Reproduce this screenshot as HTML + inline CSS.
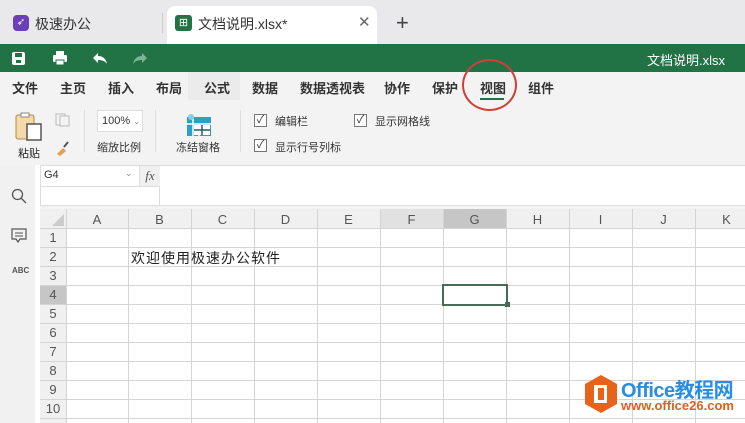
<!DOCTYPE html><html><head><meta charset="utf-8"><style>
*{margin:0;padding:0;box-sizing:border-box}
body{width:745px;height:423px;overflow:hidden;position:relative;background:#fff;font-family:"Liberation Sans","Noto Sans CJK SC",sans-serif;color:#222}
.a{position:absolute}
.vl{position:absolute;width:1px;background:#d4d4d4;top:209px;height:214px}
.hl{position:absolute;height:1px;background:#d4d4d4;left:40px;width:705px}
.ch{position:absolute;top:211px;height:18px;font-size:13px;color:#555;text-align:center;line-height:18px}
.rh{position:absolute;left:40px;width:26px;height:19px;font-size:13px;color:#555;text-align:center;line-height:19px}
.menu span{position:absolute;top:78px;font-size:13px;font-weight:bold;color:#333}
.cb{position:absolute;width:13px;height:13px;border:1px solid #777;background:#fff;font-size:11px;line-height:11px;text-align:center;color:#333}
</style></head><body>
<div class="a" style="left:0;top:0;width:745px;height:44px;background:#e9e9ec"></div>
<div class="a" style="left:13px;top:15px;width:16px;height:16px;border-radius:4px;background:#6a3fb8;color:#fff;font-size:10px;text-align:center;line-height:16px">➶</div>
<div class="a" style="left:35px;top:14px;font-size:14px;color:#333">极速办公</div>
<div class="a" style="left:162px;top:13px;width:1px;height:20px;background:#ccc"></div>
<div class="a" style="left:167px;top:6px;width:210px;height:38px;background:#fff;border-radius:8px 8px 0 0"></div>
<div class="a" style="left:175px;top:15px;width:17px;height:16px;border-radius:3px;background:#217346;color:#fff;font-size:11px;text-align:center;line-height:16px">⊞</div>
<div class="a" style="left:198px;top:14px;font-size:14px;color:#333">文档说明.xlsx*</div>
<div class="a" style="left:358px;top:13px;font-size:15px;color:#666">✕</div>
<div class="a" style="left:396px;top:10px;font-size:22px;color:#444">+</div>
<div class="a" style="left:0;top:44px;width:745px;height:28px;background:#217346"></div>
<svg class="a" style="left:11px;top:51px" width="16" height="15"><rect x="1" y="1" width="13" height="13" rx="2" fill="#fff"/><rect x="4" y="2" width="7" height="4" fill="#217346"/><rect x="5" y="9" width="5" height="3" fill="#217346"/></svg>
<svg class="a" style="left:52px;top:50px" width="16" height="16"><rect x="4" y="1" width="8" height="4" fill="#fff"/><rect x="1" y="5" width="14" height="7" rx="1" fill="#fff"/><rect x="4" y="10" width="8" height="5" fill="#fff" stroke="#217346"/></svg>
<svg class="a" style="left:92px;top:51px" width="16" height="14"><path d="M6 2 L1 7 L6 12 V9 C10 9 13 10 15 13 C14 8 11 5 6 5Z" fill="#fff"/></svg>
<svg class="a" style="left:132px;top:51px" width="16" height="14"><path d="M10 2 L15 7 L10 12 V9 C6 9 3 10 1 13 C2 8 5 5 10 5Z" fill="#7fb596"/></svg>
<div class="a" style="left:647px;top:50px;font-size:13px;color:#fff">文档说明.xlsx</div>
<div class="a" style="left:0;top:72px;width:745px;height:93px;background:#f3f3f3"></div>
<div class="a" style="left:188px;top:72px;width:52px;height:28px;background:#ebebeb"></div>
<div class="menu">
<span style="left:12px">文件</span><span style="left:60px">主页</span><span style="left:108px">插入</span><span style="left:156px">布局</span><span style="left:204px">公式</span><span style="left:252px">数据</span><span style="left:300px">数据透视表</span><span style="left:384px">协作</span><span style="left:432px">保护</span><span style="left:480px">视图</span><span style="left:528px">组件</span>
</div>
<div class="a" style="left:480px;top:98px;width:24px;height:2px;background:#217346"></div>
<div class="a" style="left:462px;top:59px;width:55px;height:52px;border:2.5px solid #d0403a;border-radius:50%"></div>
<svg class="a" style="left:14px;top:112px" width="30" height="32"><rect x="2" y="3" width="18" height="24" rx="2" fill="#f5d9a8" stroke="#b48a4a"/><rect x="7" y="1" width="8" height="4" fill="#fff" stroke="#888"/><rect x="13" y="12" width="14" height="16" fill="#fff" stroke="#555" stroke-width="1.5"/></svg>
<div class="a" style="left:18px;top:145px;font-size:11px">粘贴</div>
<svg class="a" style="left:55px;top:113px" width="16" height="14"><rect x="1" y="1" width="9" height="11" fill="none" stroke="#bbb"/><rect x="5" y="3" width="9" height="10" fill="#f3f3f3" stroke="#bbb"/></svg>
<svg class="a" style="left:54px;top:140px" width="16" height="16"><path d="M3 14 L9 8 L12 11 L6 16Z" fill="#e0a050"/><path d="M10 7 L14 2" stroke="#555" stroke-width="2"/></svg>
<div class="a" style="left:84px;top:110px;width:1px;height:42px;background:#ddd"></div>
<div class="a" style="left:97px;top:110px;width:46px;height:22px;background:#fff;border:1px solid #ddd;font-size:11px;line-height:20px;padding-left:4px;color:#333">100% <span style="font-size:8px;color:#888">⌄</span></div>
<div class="a" style="left:97px;top:139px;font-size:11px;color:#333">缩放比例</div>
<div class="a" style="left:155px;top:110px;width:1px;height:42px;background:#ddd"></div>
<svg class="a" style="left:185px;top:113px" width="28" height="24"><rect x="2" y="4" width="24" height="19" fill="#2b9fc4"/><g stroke="#fff" stroke-width="1.5"><path d="M2 11H26M14 11V23M8 4V23"/></g><rect x="9" y="12" width="16" height="10" fill="#fff"/><path d="M9 17H25M17 12V22" stroke="#2a5a6a" stroke-width="1.5"/><circle cx="6" cy="4" r="3" fill="#7fd0e8"/></svg>
<div class="a" style="left:176px;top:139px;font-size:11px;color:#333">冻结窗格</div>
<div class="a" style="left:240px;top:110px;width:1px;height:42px;background:#ddd"></div>
<div class="cb" style="left:254px;top:114px">✓</div><div class="a" style="left:275px;top:113px;font-size:11px;color:#333">编辑栏</div>
<div class="cb" style="left:354px;top:114px">✓</div><div class="a" style="left:375px;top:113px;font-size:11px;color:#333">显示网格线</div>
<div class="cb" style="left:254px;top:139px">✓</div><div class="a" style="left:275px;top:139px;font-size:11px;color:#333">显示行号列标</div>
<div class="a" style="left:0;top:165px;width:35px;height:258px;background:#f1f1f1"></div>
<svg class="a" style="left:11px;top:188px" width="16" height="16"><circle cx="6.5" cy="6.5" r="5" fill="none" stroke="#555" stroke-width="1.3"/><path d="M10 10L15 15" stroke="#555" stroke-width="1.3"/></svg>
<svg class="a" style="left:11px;top:228px" width="16" height="16"><path d="M1 1H15V11H9L7 14L5 11H1Z" fill="none" stroke="#555" stroke-width="1.2"/><path d="M4 5H12M4 8H12" stroke="#555"/></svg>
<div class="a" style="left:12px;top:266px;font-size:8px;color:#555;font-weight:bold">ABC</div>
<div class="a" style="left:35px;top:165px;width:5px;height:258px;background:#fff"></div>
<div class="a" style="left:40px;top:165px;width:705px;height:44px;background:#fff;border-top:1px solid #ddd"></div>
<div class="a" style="left:40px;top:166px;width:120px;height:40px;border:1px solid #ddd;border-top:none"></div>
<div class="a" style="left:40px;top:186px;width:120px;height:1px;background:#ddd"></div>
<div class="a" style="left:44px;top:169px;font-size:11px;color:#333">G4</div>
<div class="a" style="left:125px;top:168px;font-size:9px;color:#888">⌄</div>
<div class="a" style="left:139px;top:166px;width:21px;height:20px;background:#f0f0f0;border-left:1px solid #ddd;font-family:'Liberation Serif',serif;font-style:italic;font-size:13px;text-align:center;line-height:19px;color:#555">fx</div>
<div class="a" style="left:40px;top:205px;width:705px;height:4px;background:#f3f3f3;border-top:1px solid #ddd"></div>
<div class="a" style="left:40px;top:209px;width:705px;height:20px;background:#f0f0f0"></div>
<div class="a" style="left:40px;top:209px;width:26px;height:214px;background:#f0f0f0"></div>
<div class="a" style="left:380px;top:209px;width:63px;height:20px;background:#e1e1e1"></div>
<div class="a" style="left:443px;top:209px;width:63px;height:20px;background:#c6c6c6"></div>
<div class="a" style="left:40px;top:285px;width:26px;height:19px;background:#c6c6c6"></div>
<svg class="a" style="left:52px;top:214px" width="12" height="12"><path d="M12 0V12H0Z" fill="#ccc"/></svg>
<div class="vl" style="left:66px"></div><div class="vl" style="left:128px"></div><div class="vl" style="left:191px"></div><div class="vl" style="left:254px"></div><div class="vl" style="left:317px"></div><div class="vl" style="left:380px"></div><div class="vl" style="left:443px"></div><div class="vl" style="left:506px"></div><div class="vl" style="left:569px"></div><div class="vl" style="left:632px"></div><div class="vl" style="left:695px"></div>
<div class="hl" style="top:228px"></div><div class="hl" style="top:247px"></div><div class="hl" style="top:266px"></div><div class="hl" style="top:285px"></div><div class="hl" style="top:304px"></div><div class="hl" style="top:323px"></div><div class="hl" style="top:342px"></div><div class="hl" style="top:361px"></div><div class="hl" style="top:380px"></div><div class="hl" style="top:399px"></div><div class="hl" style="top:418px"></div>
<div class="ch" style="left:66px;width:62px">A</div><div class="ch" style="left:128px;width:63px">B</div><div class="ch" style="left:191px;width:63px">C</div><div class="ch" style="left:254px;width:63px">D</div><div class="ch" style="left:317px;width:63px">E</div><div class="ch" style="left:380px;width:63px">F</div><div class="ch" style="left:443px;width:63px">G</div><div class="ch" style="left:506px;width:63px">H</div><div class="ch" style="left:569px;width:63px">I</div><div class="ch" style="left:632px;width:63px">J</div><div class="ch" style="left:695px;width:63px">K</div>
<div class="rh" style="top:228px">1</div><div class="rh" style="top:247px">2</div><div class="rh" style="top:266px">3</div><div class="rh" style="top:285px">4</div><div class="rh" style="top:304px">5</div><div class="rh" style="top:323px">6</div><div class="rh" style="top:342px">7</div><div class="rh" style="top:361px">8</div><div class="rh" style="top:380px">9</div><div class="rh" style="top:399px">10</div>
<div class="a" style="left:131px;top:248px;font-size:14px;color:#222;letter-spacing:1px">欢迎使用极速办公软件</div>
<div class="a" style="left:442px;top:284px;width:66px;height:22px;border:2px solid #4a6a58"></div>
<div class="a" style="left:505px;top:302px;width:5px;height:5px;background:#4a6a58"></div>
<svg class="a" style="left:583px;top:374px" width="36" height="40"><path d="M18 1L34 10V30L18 39L2 30V10Z" fill="#e8621a"/><rect x="11" y="11" width="13" height="18" fill="#fff"/><rect x="15" y="14" width="6" height="12" fill="#e8621a"/></svg>
<div class="a" style="left:621px;top:374px;font-size:20px;font-weight:bold;color:#2a8ee0;letter-spacing:-0.5px">Office教程网</div>
<div class="a" style="left:621px;top:398px;font-size:13px;font-weight:bold;color:#e0601a">www.office26.com</div>
</body></html>
